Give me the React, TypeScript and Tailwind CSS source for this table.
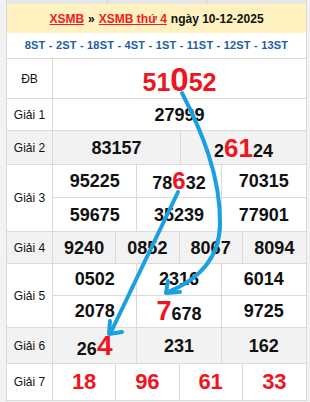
import React from "react";

const line = "border-[#dadada]";

function Label({ text }: { text: string }) {
	return (
		<div className={`w-[46px] shrink-0 flex items-center justify-center border-r ${line} text-[12px] text-[#111]`}>
			{text}
		</div>
	);
}

function Num({ children }: { children: React.ReactNode }) {
	return (
		<div className={`flex items-center justify-center border-r last:border-r-0 ${line}`}>
			<span className="flex items-baseline font-bold text-[18px] leading-none text-[#111]">{children}</span>
		</div>
	);
}

function Red({ children, size }: { children: React.ReactNode; size: string }) {
	return <span className={`text-[#f0141e] ${size}`}>{children}</span>;
}

export default function App() {
	return (
		<div className="relative w-[310px] h-[402px] overflow-hidden bg-[#f2f2f2] pl-[6px] font-['Liberation_Sans',Arial,sans-serif]">
			<div className={`w-[301px] border-x ${line} bg-white`}>
				{/* tabs cut off at the top */}
				<div className="flex h-[4px] bg-[#e6e6e6]">
					<div className="w-[101px] border-r border-[#d0d0d0]" />
					<div className="w-[99px] border-r border-[#d0d0d0]" />
					<div className="flex-1" />
				</div>
				<div className="h-[29px] bg-[#fff1c0] flex items-center justify-center text-[12px] font-bold text-[#111]">
					<a className="text-[#ee1c25] underline">XSMB</a>
					<span className="mx-[4px]">»</span>
					<a className="text-[#ee1c25] underline">XSMB thứ 4</a>
					<span className="ml-[4px]">ngày 10-12-2025</span>
				</div>
				<div className={`h-[26px] border-b ${line} flex items-center justify-center text-[11px] font-bold text-[#1d5ea8] tracking-[0.2px]`}>
					8ST - 2ST - 18ST - 4ST - 1ST - 11ST - 12ST - 13ST
				</div>

				{/* ĐB */}
				<div className={`flex h-[40px] border-b ${line}`}>
					<Label text="ĐB" />
					<div className="flex-1 flex items-center justify-center">
						<span className="flex items-baseline font-bold leading-none text-[#f0141e] text-[25px] pt-[1px]">
							51<span className="text-[33px]">0</span>52
						</span>
					</div>
				</div>

				{/* Giải 1 */}
				<div className={`flex h-[32px] border-b ${line}`}>
					<Label text="Giải 1" />
					<div className="flex-1 grid grid-cols-1">
						<Num>27999</Num>
					</div>
				</div>

				{/* Giải 2 */}
				<div className={`flex h-[34px] border-b ${line} bg-[#f2f2f2]`}>
					<Label text="Giải 2" />
					<div className="flex-1 grid grid-cols-[128px_1fr]">
						<Num>83157</Num>
						<Num>
							2<Red size="text-[26px]">61</Red>24
						</Num>
					</div>
				</div>

				{/* Giải 3 */}
				<div className={`flex h-[67px] border-b ${line}`}>
					<Label text="Giải 3" />
					<div className="flex-1 grid grid-cols-3 grid-rows-2">
						<div className={`grid grid-cols-subgrid col-span-3 border-b ${line}`}>
							<Num>95225</Num>
							<Num>
								78<Red size="text-[24px]">6</Red>32
							</Num>
							<Num>70315</Num>
						</div>
						<div className="grid grid-cols-subgrid col-span-3">
							<Num>59675</Num>
							<Num>35239</Num>
							<Num>77901</Num>
						</div>
					</div>
				</div>

				{/* Giải 4 */}
				<div className={`flex h-[32px] border-b ${line} bg-[#f2f2f2]`}>
					<Label text="Giải 4" />
					<div className="flex-1 grid grid-cols-4">
						<Num>9240</Num>
						<Num>0852</Num>
						<Num>8067</Num>
						<Num>8094</Num>
					</div>
				</div>

				{/* Giải 5 */}
				<div className={`flex h-[64px] border-b ${line}`}>
					<Label text="Giải 5" />
					<div className="flex-1 grid grid-cols-3 grid-rows-2">
						<div className={`grid grid-cols-subgrid col-span-3 border-b ${line}`}>
							<Num>0502</Num>
							<Num>2316</Num>
							<Num>6014</Num>
						</div>
						<div className="grid grid-cols-subgrid col-span-3">
							<Num>2078</Num>
							<Num>
								<Red size="text-[27px]">7</Red>678
							</Num>
							<Num>9725</Num>
						</div>
					</div>
				</div>

				{/* Giải 6 */}
				<div className={`flex h-[36px] border-b ${line} bg-[#f2f2f2]`}>
					<Label text="Giải 6" />
					<div className="flex-1 grid grid-cols-3">
						<Num>
							26<Red size="text-[28px]">4</Red>
						</Num>
						<Num>231</Num>
						<Num>162</Num>
					</div>
				</div>

				{/* Giải 7 */}
				<div className={`flex h-[37px] border-b ${line}`}>
					<Label text="Giải 7" />
					<div className="flex-1 grid grid-cols-4">
						{["18", "96", "61", "33"].map((n) => (
							<div key={n} className={`flex items-center justify-center border-r last:border-r-0 ${line}`}>
								<span className="font-bold text-[22px] leading-none text-[#f0141e]">{n}</span>
							</div>
						))}
					</div>
				</div>
			</div>

			{/* hand-drawn arrows over the table */}
			<svg className="absolute left-0 top-0 pointer-events-none" width="310" height="402" viewBox="0 0 310 402">
				<g fill="none" stroke="#1a9fe1" strokeWidth="4" strokeLinecap="round" strokeLinejoin="round">
					<path d="M182 93 C 200 128, 221 175, 220 225 C 219 262, 195 281, 168 292" />
					<path d="M168 281 L166 293 L180 292" />
					<path d="M178 192 Q 150 250, 111 332" />
					<path d="M110 321 L109 334 L122 332" />
				</g>
			</svg>
		</div>
	);
}
